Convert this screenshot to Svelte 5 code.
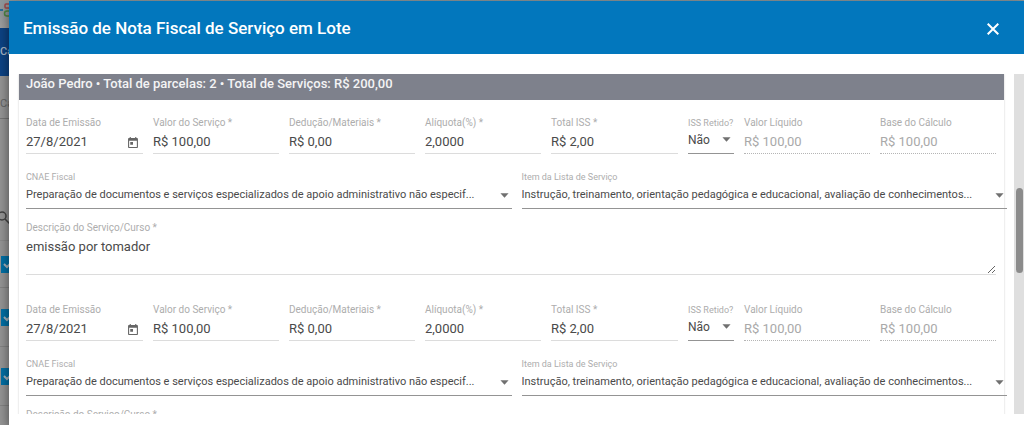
<script>
  const cnae = 'Preparação de documentos e serviços especializados de apoio administrativo não especif...';
  const item = 'Instrução, treinamento, orientação pedagógica e educacional, avaliação de conhecimentos...';

  const entries = [0, 1].map((id) => ({
    id,
    date: '27/8/2021',
    money: [
      { key: 'valor', label: 'Valor do Serviço *', value: 'R$ 100,00' },
      { key: 'deducao', label: 'Dedução/Materiais *', value: 'R$ 0,00' },
      { key: 'aliquota', label: 'Alíquota(%) *', value: '2,0000' },
      { key: 'iss', label: 'Total ISS *', value: 'R$ 2,00' }
    ],
    totals: [
      { key: 'liquido', label: 'Valor Líquido', value: 'R$ 100,00' },
      { key: 'base', label: 'Base do Cálculo', value: 'R$ 100,00' }
    ],
    lists: [
      { key: 'cnae', label: 'CNAE Fiscal', value: cnae },
      { key: 'item', label: 'Item da Lista de Serviço', value: item }
    ],
    description: 'emissão por tomador'
  }));
</script>

{#snippet caret()}
  <svg class="caret" viewBox="0 0 10 5" aria-hidden="true"><path d="M0.5 0h9L5 5z" /></svg>
{/snippet}

<div class="screen">
  <div class="page" aria-hidden="true">
    <div class="brand">
      <svg viewBox="0 0 10 16">
        <path d="M0 9h3" stroke="#2d6f9b" stroke-width="2" />
        <rect x="5" y="3" width="6" height="4" rx="1" fill="none" stroke="#a04848" stroke-width="1.5" />
        <path d="M10 10H7a2 2 0 0 0 0 5h3" fill="none" stroke="#4f8a45" stroke-width="1.5" />
      </svg>
    </div>
    <div class="nav">Ca</div>
    <div class="filter">Ca</div>
    <div class="search">
      <svg viewBox="0 0 14 14"><circle cx="5" cy="5" r="4" /><path d="M8 8l5 5" /></svg>
    </div>
    {#each [0, 1, 2] as row (row)}
      <div class="row">
        <span class="tick"><svg viewBox="0 0 12 12"><path d="M2 6l3 3 5-5" /></svg></span>
      </div>
    {/each}
  </div>

  <div class="modal" role="dialog" aria-labelledby="title">
    <header>
      <h1 id="title">Emissão de Nota Fiscal de Serviço em Lote</h1>
      <button class="close" aria-label="Fechar">
        <svg viewBox="0 0 12 12"><path d="M0.7 0.7l10.6 10.6M11.3 0.7L0.7 11.3" /></svg>
      </button>
    </header>

    <div class="body">
      <div class="scroll">
        <section class="card">
          <h2>João Pedro • Total de parcelas: 2 • Total de Serviços: R$ 200,00</h2>
          {#each entries as entry (entry.id)}
            <div class="entry">
              <div class="fields">
                <div class="field">
                  <label for="data-{entry.id}">Data de Emissão</label>
                  <div class="control">
                    <input id="data-{entry.id}" value={entry.date} />
                    <button class="calendar" aria-label="Abrir calendário">
                      <svg viewBox="0 0 18 20">
                        <path d="M16 2h-1V0h-2v2H5V0H3v2H2C0.9 2 0 2.9 0 4v14c0 1.100.9 2 2 2h14c1.100 0 2-.9 2-2V4c0-1.100-.9-2-2-2zm0 16H2V7h14v11zM4 9h5v5H4z" />
                      </svg>
                    </button>
                  </div>
                </div>
                {#each entry.money as f (f.key)}
                  <div class="field">
                    <label for="{f.key}-{entry.id}">{f.label}</label>
                    <div class="control"><input id="{f.key}-{entry.id}" value={f.value} /></div>
                  </div>
                {/each}
                <div class="field choice short">
                  <label for="retido-{entry.id}">ISS Retido?</label>
                  <div class="control">
                    <select id="retido-{entry.id}"><option>Não</option></select>
                    {@render caret()}
                  </div>
                </div>
                {#each entry.totals as f (f.key)}
                  <div class="field off">
                    <label for="{f.key}-{entry.id}">{f.label}</label>
                    <div class="control"><input id="{f.key}-{entry.id}" value={f.value} disabled /></div>
                  </div>
                {/each}
              </div>

              <div class="lists">
                {#each entry.lists as f (f.key)}
                  <div class="field choice">
                    <label for="{f.key}-{entry.id}">{f.label}</label>
                    <div class="control">
                      <select id="{f.key}-{entry.id}"><option>{f.value}</option></select>
                      {@render caret()}
                    </div>
                  </div>
                {/each}
              </div>

              <div class="field">
                <label for="descricao-{entry.id}">Descrição do Serviço/Curso *</label>
                <textarea id="descricao-{entry.id}" value={entry.description}></textarea>
              </div>
            </div>
          {/each}
        </section>
      </div>
      <div class="track" aria-hidden="true"><div class="thumb"></div></div>
    </div>
  </div>
</div>

<style>
  :global(body) {
    margin: 0;
    font-family: Roboto, 'Liberation Sans', sans-serif;
  }
  * {
    box-sizing: border-box;
  }
  .screen {
    position: relative;
    height: 100vh;
    overflow: hidden;
    background: #979797;
  }
  svg {
    display: block;
  }

  .brand {
    height: 28px;
    padding-top: 1px;
    background: linear-gradient(#8d979b, #a2a2a2);
  }
  .brand svg {
    width: 10px;
    height: 16px;
  }
  .nav {
    height: 48px;
    background: #0d4486;
    color: #a9b6c6;
    font-size: 11px;
    font-weight: 500;
    line-height: 48px;
  }
  .filter {
    height: 43px;
    padding-top: 10px;
    border-bottom: 1px solid #777;
    color: #666;
    font-size: 11px;
    line-height: 36px;
  }
  .search {
    height: 122px;
    padding-top: 92px;
    border-bottom: 1px solid #8c8c8c;
  }
  .search svg {
    width: 14px;
    height: 14px;
    margin-left: -3px;
    fill: none;
    stroke: #444;
    stroke-width: 1.5;
  }
  .row {
    display: flex;
    align-items: center;
    height: 59px;
    padding-left: 1px;
    border-bottom: 1px solid #858585;
  }
  .row:nth-of-type(5) {
    height: 47px;
  }
  .tick {
    display: grid;
    align-items: center;
    width: 17px;
    height: 17px;
    padding-left: 1px;
    background: #0272a8;
  }
  .tick svg {
    width: 12px;
    height: 12px;
    fill: none;
    stroke: #a9b6c0;
    stroke-width: 2;
  }

  .modal {
    position: absolute;
    inset: 1px 0 0 9px;
    display: flex;
    flex-direction: column;
    background: #fff;
    box-shadow: 0 4px 12px rgba(0, 0, 0, 0.55);
  }
  header {
    display: flex;
    align-items: center;
    justify-content: space-between;
    height: 53px;
    flex: none;
    padding: 0 25px 0 14px;
    background: #0277bd;
    color: #fff;
  }
  h1 {
    margin: 0;
    font-size: 17px;
    font-weight: 500;
    line-height: 24px;
  }
  button {
    padding: 0;
    border: 0;
    background: none;
    cursor: pointer;
  }
  .close svg {
    width: 12px;
    height: 12px;
    margin-top: 2px;
    fill: none;
    stroke: #fff;
    stroke-width: 2;
  }

  .body {
    display: flex;
    flex: 1;
    min-height: 0;
    padding: 20px 0 11px;
  }
  .scroll {
    flex: 1;
    min-width: 0;
    padding: 0 10px;
    overflow: hidden;
  }
  .track {
    display: flex;
    flex-direction: column;
    align-items: center;
    width: 10px;
    background: #dfdfdf;
  }
  .track::before {
    content: '';
    flex: 114;
  }
  .thumb {
    flex: 85;
    width: 7px;
    border-radius: 4px;
    background: #8b8b8b;
  }
  .track::after {
    content: '';
    flex: 141;
  }

  .card {
    box-shadow: 0 0 2px rgba(0, 0, 0, 0.2);
  }
  h2 {
    margin: 0;
    padding: 0 7px 6px;
    background: #7e818c;
    color: #f4f4f5;
    font-size: 13px;
    font-weight: 500;
    line-height: 20px;
  }
  .entry {
    padding: 16px 8px 12px 7px;
  }
  .fields {
    display: grid;
    grid-template-columns: 117fr 126fr 126fr 116fr 127fr 46px 126fr 116fr;
    gap: 10px;
  }
  .lists {
    display: grid;
    grid-template-columns: 1fr 1fr;
    gap: 10px;
    margin: 16px -11px 12px 0;
  }
  .field {
    display: flex;
    flex-direction: column;
    min-width: 0;
  }
  label {
    color: #adadad;
    font-size: 10px;
    line-height: 14px;
    white-space: nowrap;
  }
  .control {
    display: flex;
    align-items: center;
    height: 24px;
    border-bottom: 1px solid #dcdcdc;
  }
  input,
  select,
  textarea {
    min-width: 0;
    flex: 1;
    padding: 0;
    border: 0;
    outline: 0;
    background: none;
    color: #4a4a4a;
    font-family: inherit;
    font-size: 13px;
    line-height: 20px;
  }
  input {
    width: 100%;
  }
  .calendar {
    margin-right: 5px;
  }
  .calendar svg {
    width: 10px;
    height: 11px;
    margin-top: 2px;
    fill: #666;
  }
  .choice label {
    font-size: 9px;
  }
  .choice .control {
    padding: 0 3px 2px 0;
    border-color: #949494;
  }
  .choice.short .control {
    padding-bottom: 4px;
  }
  select {
    appearance: none;
    font-size: 12px;
    text-overflow: ellipsis;
  }
  .lists select {
    font-size: 11px;
  }
  .caret {
    flex: none;
    width: 9px;
    height: 5px;
    fill: #707070;
  }
  .lists .control {
    height: 25px;
  }
  .off .control {
    border-bottom: 1px dotted #b5b5b5;
  }
  .off input {
    color: #a9a9a9;
  }
  textarea {
    flex: none;
    width: 100%;
    height: 40px;
    padding-top: 2px;
    border-bottom: 1px solid #dcdcdc;
    resize: vertical;
  }
</style>
